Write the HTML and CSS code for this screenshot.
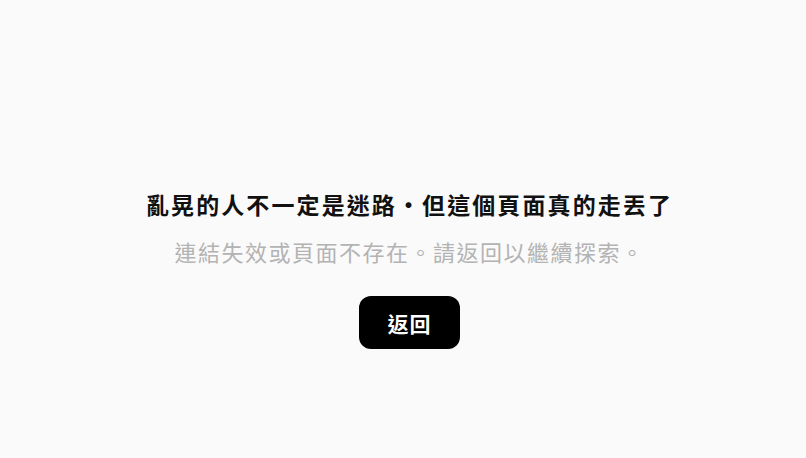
FILE: index.html
```html
<!DOCTYPE html>
<html lang="zh-Hant">
<head>
<meta charset="utf-8">
<title>找不到頁面</title>
<link rel="stylesheet" href="styles.css">
</head>
<body>
<main class="page">
  <h1 class="title">亂晃的人不一定是迷路·但這個頁面真的走丟了</h1>
  <p class="subtitle">連結失效或頁面不存在。請返回以繼續探索。</p>
  <a class="back" href="#">返回</a>
</main>
</body>
</html>
```
FILE: styles.css
```css
html, body {
  margin: 0;
  padding: 0;
  background: #fafafa;
}
body {
  font-family: "Noto Sans CJK TC", "Noto Sans", sans-serif;
}
.page {
  display: flex;
  flex-direction: column;
  align-items: center;
  padding-top: 189px;
  padding-left: 13px;
}
.title {
  margin: 0;
  font-size: 23px;
  line-height: 30px;
  font-weight: 700;
  color: #111;
  letter-spacing: 2.1px;
}
.subtitle {
  margin: 17px 0 0;
  font-size: 22px;
  line-height: 30px;
  color: #b3b3b3;
  letter-spacing: 1.5px;
}
.back {
  margin-top: 30px;
  display: inline-flex;
  align-items: center;
  justify-content: center;
  width: 101px;
  height: 53px;
  box-sizing: border-box;
  background: #000;
  color: #fff;
  border-radius: 12px;
  font-size: 21px;
  font-weight: 700;
  letter-spacing: 1px;
  text-decoration: none;
}
```
